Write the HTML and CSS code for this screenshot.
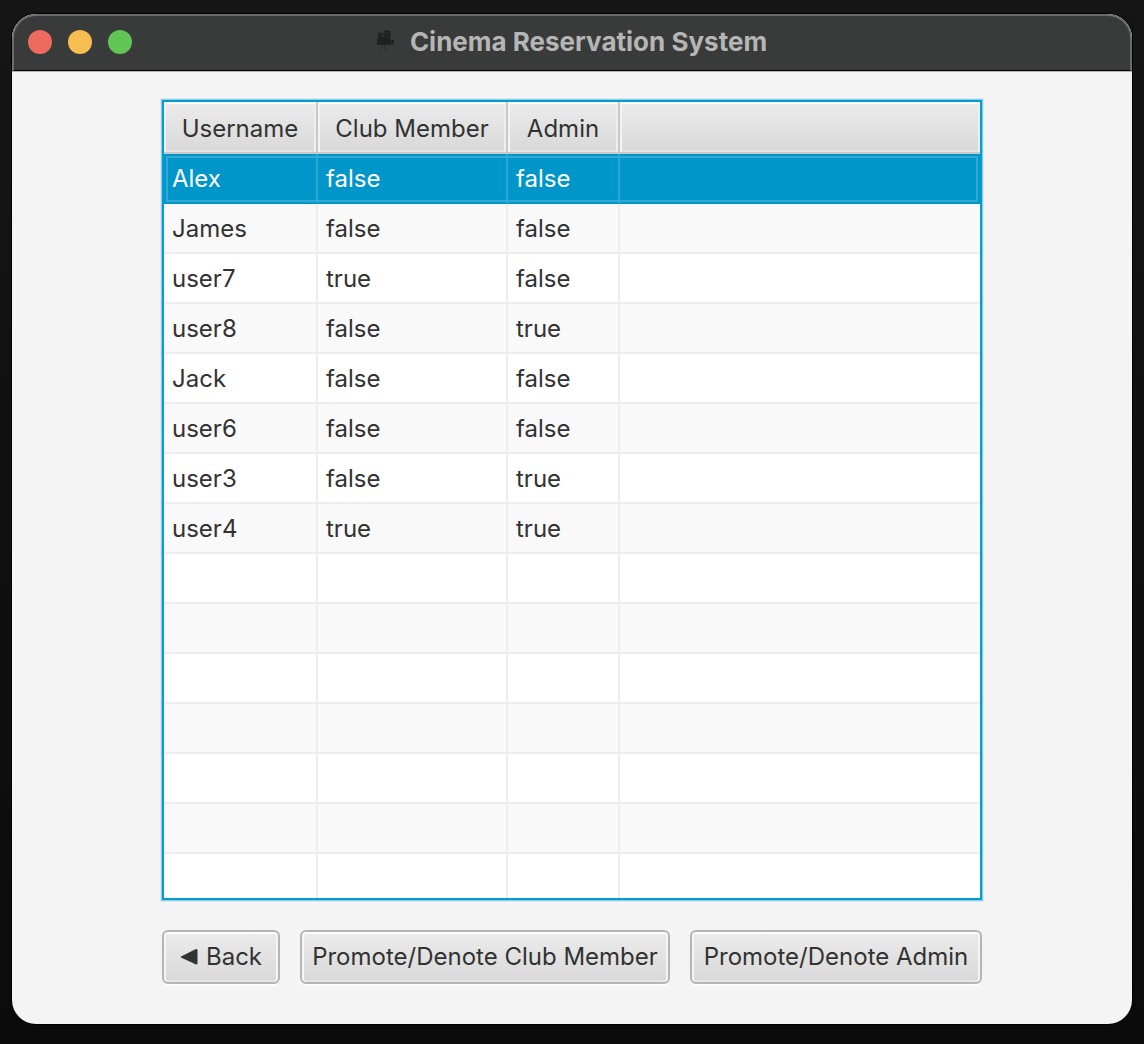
FILE: index.html
```
<!DOCTYPE html>
<html lang="en">
<head>
<meta charset="utf-8">
<title>Cinema Reservation System</title>
<link rel="stylesheet" href="styles.css">
</head>
<body>
<div class="window">
  <header class="titlebar">
    <div class="lights">
      <button class="light close" type="button" aria-label="Close"></button>
      <button class="light minimize" type="button" aria-label="Minimize"></button>
      <button class="light zoom" type="button" aria-label="Zoom"></button>
    </div>
    <h1 class="title">
      <svg class="camera" width="18" height="24" viewBox="0 0 18 24" aria-hidden="true">
        <g fill="#202121">
          <path d="M0 9h14v2l3-2v6l-3-2v2H0z"/>
          <path d="M1 7h12v2H1z"/>
          <circle cx="3" cy="5" r="2.6"/>
          <circle cx="10" cy="4" r="3.8"/>
        </g>
        <g fill="#393b3a">
          <circle cx="2.5" cy="4.5" r=".7"/>
          <circle cx="8.3" cy="3.2" r=".8"/>
          <circle cx="11.6" cy="3.2" r=".8"/>
          <circle cx="10" cy="6" r=".7"/>
        </g>
        <path d="M6 15l-2.500 6M7.500 15l2 6" stroke="#2b2c2c" fill="none"/>
      </svg>
      Cinema Reservation System
    </h1>
  </header>
  <main class="content">
    <div class="table-view">
      <table class="users">
        <colgroup><col class="col-name"><col class="col-club"><col class="col-admin"><col></colgroup>
        <thead><tr><th scope="col">Username</th><th scope="col">Club Member</th><th scope="col">Admin</th><td></td></tr></thead>
        <tbody>
          <tr class="selected"><td>Alex</td><td>false</td><td>false</td><td></td></tr>
          <tr><td>James</td><td>false</td><td>false</td><td></td></tr>
          <tr><td>user7</td><td>true</td><td>false</td><td></td></tr>
          <tr><td>user8</td><td>false</td><td>true</td><td></td></tr>
          <tr><td>Jack</td><td>false</td><td>false</td><td></td></tr>
          <tr><td>user6</td><td>false</td><td>false</td><td></td></tr>
          <tr><td>user3</td><td>false</td><td>true</td><td></td></tr>
          <tr><td>user4</td><td>true</td><td>true</td><td></td></tr>
          <tr><td></td><td></td><td></td><td></td></tr>
          <tr><td></td><td></td><td></td><td></td></tr>
          <tr><td></td><td></td><td></td><td></td></tr>
          <tr><td></td><td></td><td></td><td></td></tr>
          <tr><td></td><td></td><td></td><td></td></tr>
          <tr><td></td><td></td><td></td><td></td></tr>
          <tr><td></td><td></td><td></td><td></td></tr>
        </tbody>
      </table>
    </div>
    <div class="actions">
      <button class="action" type="button"><svg width="18" height="18" viewBox="0 0 18 18" aria-hidden="true"><path d="M1 8.500L16 1q1.500 0 1.500 1v13.500q0 1-1.500 1L1 9.500q-.6-.5 0-1z" fill="#323232"/></svg>Back</button>
      <button class="action" type="button">Promote/Denote Club Member</button>
      <button class="action" type="button">Promote/Denote Admin</button>
    </div>
  </main>
</div>
</body>
</html>
```
FILE: styles.css
```
* {
  box-sizing: border-box;
}

body {
  margin: 0;
  padding: 14px 12px 20px;
  background: linear-gradient(#151515, #0b0b0b);
  color: #323232;
  font-family: Inter, "Liberation Sans", sans-serif;
  font-size: 24px;
  line-height: 32px;
}

.window {
  display: flex;
  flex-direction: column;
  height: calc(100vh - 34px);
  min-height: 400px;
  border-radius: 24px;
  overflow: hidden;
  background: #f4f4f4;
  box-shadow: 0 0 0 1px #000;
}

.titlebar {
  display: grid;
  grid-template-columns: 1fr auto 1fr;
  align-items: center;
  flex: none;
  height: 57px;
  padding: 0 14px 2px;
  border: 2px solid #6b6c6c;
  border-bottom: 1px solid #000;
  border-radius: 24px 24px 0 0;
  background: #393b3a;
  box-shadow: 0 1px #b9b4b6;
}

.lights {
  display: flex;
  gap: 16px;
}

.light {
  width: 24px;
  height: 24px;
  padding: 0;
  border: 0;
  border-radius: 50%;
}

.close {
  background: #ed6a5f;
}

.minimize {
  background: #f6be50;
}

.zoom {
  background: #61c555;
}

.title {
  display: flex;
  align-items: center;
  gap: 15px;
  margin: 0;
  color: #b4b6b5;
  font-size: 26px;
  font-weight: 700;
}

.content {
  display: flex;
  flex-direction: column;
  flex: 1;
  gap: 30px;
  width: 100%;
  max-width: 820px;
  min-height: 0;
  margin: 0 auto;
  padding: 29px 0 40px;
}

.table-view {
  flex: 1;
  min-height: 0;
  overflow: hidden;
  border: 2px solid #039ed3;
  background: #fff;
  box-shadow: 0 0 0 1px #8ccbe3, 0 0 0 2px #dcebf1;
}

.users {
  width: 100%;
  table-layout: fixed;
  border-collapse: separate;
  border-spacing: 0;
}

.col-name {
  width: 154px;
}

.col-club {
  width: 190px;
}

.col-admin {
  width: 112px;
}

.users thead th,
.users thead td {
  height: 52px;
  padding: 4px 0 0;
  border: solid #c8c8c8;
  border-width: 0 2px 2px 0;
  background: linear-gradient(#ececec, #d8d8d8);
  box-shadow: inset 0 2px #fff, inset 2px 0 #f3f3f3, inset -2px 0 #eee, inset 0 -2px #e3e3e3;
  font-weight: 400;
  text-align: center;
}

.users thead td {
  border-right: 0;
}

.users tbody tr {
  position: relative;
}

.users tbody td {
  height: 50px;
  padding: 2px 8px 0;
  border: solid #ededed;
  border-width: 0 2px 2px 0;
}

.users tbody td:last-child {
  border-right: 0;
}

.users tbody tr:nth-child(even) {
  background: #f9f9f9;
}

.users tbody .selected {
  background: #0096c9;
  color: #fff;
}

.users tbody .selected td {
  border-right-color: #2aa5d1;
  border-bottom-color: #0096c9;
}

.selected td:first-child::before {
  content: "";
  position: absolute;
  inset: 2px;
  border: 2px solid #33a9d4;
  pointer-events: none;
}

.actions {
  display: grid;
  grid-template-columns: 118fr 370fr 292fr;
  gap: 20px;
}

.action {
  display: flex;
  align-items: center;
  justify-content: center;
  gap: 8px;
  height: 54px;
  padding: 0;
  border: 2px solid #b5b5b5;
  border-radius: 6px;
  background: linear-gradient(#ececec, #d8d8d8);
  box-shadow: inset 0 2px #fdfdfd, inset 2px 0 #f5f5f5, inset -2px 0 #f5f5f5, inset 0 -2px #e3e3e3, 0 2px #fcfcfc;
  color: inherit;
  font: inherit;
  white-space: nowrap;
}
```
